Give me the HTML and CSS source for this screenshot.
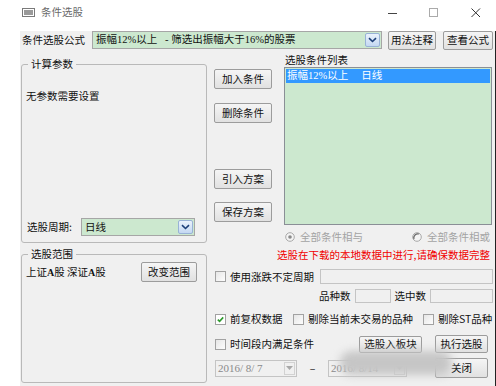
FILE: index.html
```html
<!DOCTYPE html>
<html lang="zh-CN">
<head>
<meta charset="utf-8">
<title>条件选股</title>
<link rel="stylesheet" href="styles.css">
</head>
<body>
<div class="titlebar">
  <svg class="app-icon" width="13" height="9" viewBox="0 0 13 9"><rect x="0.5" y="0.5" width="12" height="8" fill="#fff" stroke="#7a7a7a"/><rect x="2" y="2" width="9" height="5" fill="#9a9a9a"/></svg>
  <span class="title">条件选股</span>
  <div class="win-ctrls">
    <svg class="wc-min" width="10" height="10" viewBox="0 0 10 10"><path d="M0 5.5H9" stroke="#444" stroke-width="1"/></svg>
    <svg class="wc-max" width="10" height="10" viewBox="0 0 10 10"><rect x="0.5" y="0.5" width="8" height="8" fill="none" stroke="#aaa"/></svg>
    <svg class="wc-close" width="10" height="10" viewBox="0 0 10 10"><path d="M0.5 0.5L9 9M9 0.5L0.5 9" stroke="#333" stroke-width="1"/></svg>
  </div>
</div>
<div class="client">
  <div class="formula">
    <span class="formula-label">条件选股公式</span>
    <div class="combo combo-formula">
      <span class="combo-text mixed">振幅12%以上 &nbsp;&nbsp;- 筛选出振幅大于16%的股票</span>
      <span class="drop"><svg width="9" height="6" viewBox="0 0 9 6"><path d="M1 1.2L4.5 4.5L8 1.2" fill="none" stroke="#1d3f78" stroke-width="1.6"/></svg></span>
    </div>
    <button class="btn btn-usage">用法注释</button>
    <button class="btn btn-view">查看公式</button>
  </div>
  <div class="main">
    <div class="left-col">
      <fieldset class="group g-params">
        <legend>计算参数</legend>
        <div class="no-params">无参数需要设置</div>
        <div class="period-row">
          <span class="period-label">选股周期:</span>
          <div class="combo combo-period">
            <span class="combo-text">日线</span>
            <span class="drop"><svg width="9" height="6" viewBox="0 0 9 6"><path d="M1 1.2L4.5 4.5L8 1.2" fill="none" stroke="#1d3f78" stroke-width="1.6"/></svg></span>
          </div>
        </div>
      </fieldset>
      <fieldset class="group g-range">
        <legend>选股范围</legend>
        <div class="range-row">
          <span class="range-text">上证<b>A</b>股 深证<b>A</b>股</span>
          <button class="btn btn-range">改变范围</button>
        </div>
      </fieldset>
    </div>
    <div class="right-col">
      <div class="top-right">
        <div class="btn-col">
          <button class="btn btn-side b-add">加入条件</button>
          <button class="btn btn-side b-del">删除条件</button>
          <button class="btn btn-side b-import">引入方案</button>
          <button class="btn btn-side b-save">保存方案</button>
        </div>
        <div class="list-col">
          <div class="list-label">选股条件列表</div>
          <div class="list">
            <div class="list-item selected mixed">振幅12%以上 &nbsp;&nbsp;&nbsp;&nbsp;日线</div>
          </div>
        </div>
      </div>
      <div class="radios">
        <span class="radio-item r-and"><svg class="radio" width="10" height="10" viewBox="0 0 10 10"><circle cx="5" cy="5" r="4.3" fill="#f4f4f4" stroke="#a8a8a8"/><circle cx="5" cy="5" r="1.8" fill="#8a8a8a"/></svg>全部条件相与</span>
        <span class="radio-item r-or"><svg class="radio" width="10" height="10" viewBox="0 0 10 10"><circle cx="5" cy="5" r="4.3" fill="#f4f4f4" stroke="#a8a8a8"/><path d="M2 7A4 4 0 0 1 7 2" fill="none" stroke="#6a6a6a" stroke-width="1.2"/></svg>全部条件相或</span>
      </div>
      <div class="warn">选股在下载的本地数据中进行,请确保数据完整</div>
      <div class="row r-period">
        <span class="check-item"><span class="checkbox"></span>使用涨跌不定周期</span>
        <span class="textbox tb-period"></span>
      </div>
      <div class="row r-count">
        <span class="count-label">品种数</span>
        <span class="textbox tb-count"></span>
        <span class="count-label sel-label">选中数</span>
        <span class="textbox tb-sel"></span>
      </div>
      <div class="row r-checks">
        <span class="check-item ci-fq"><span class="checkbox checked"><svg width="9" height="9" viewBox="0 0 9 9"><path d="M1.8 4.6L3.6 6.4L7.2 2.4" fill="none" stroke="#2e9a2e" stroke-width="1.6"/></svg></span>前复权数据</span>
        <span class="check-item ci-exclude"><span class="checkbox"></span>剔除当前未交易的品种</span>
        <span class="check-item ci-st"><span class="checkbox"></span>剔除ST品种</span>
      </div>
      <div class="row r-time">
        <span class="check-item ci-time"><span class="checkbox"></span>时间段内满足条件</span>
        <button class="btn btn-board">选股入板块</button>
        <button class="btn btn-run">执行选股</button>
      </div>
      <div class="row r-dates">
        <div class="datepick dp-from"><span class="dp-text">2016/ 8/ 7</span><span class="dp-drop"><svg width="7" height="4" viewBox="0 0 7 4"><path d="M0 0H7L3.5 4Z" fill="#a8a8a8"/></svg></span></div>
        <span class="dash">–</span>
        <div class="datepick dp-to"><span class="dp-text">2016/ 8/14</span><span class="dp-drop"><svg width="7" height="4" viewBox="0 0 7 4"><path d="M0 0H7L3.5 4Z" fill="#a8a8a8"/></svg></span></div>
        <button class="btn btn-close">关闭</button>
      </div>
    </div>
  </div>
  <div class="blur"></div>
</div>
</body>
</html>
```
FILE: styles.css
```css
* { box-sizing: border-box; }
body {
  margin: 0;
  width: 496px;
  height: 386px;
  overflow: hidden;
  background: #fff;
  font-family: "Noto Sans CJK SC", "Noto Sans", sans-serif;
  font-size: 10.5px;
  line-height: 14px;
  color: #111;
}
.titlebar {
  height: 24px;
  display: flex;
  align-items: center;
}
.app-icon { margin-left: 22px; margin-top: 1px; }
.title { margin-left: 6px; color: #6a6a6a; font-size: 10.5px; }
.win-ctrls { margin-left: auto; display: flex; align-items: center; }
.wc-min { margin-right: 31px; margin-top: 2px; }
.wc-max { margin-right: 32px; margin-top: 2px; }
.wc-close { margin-right: 15px; margin-top: 1px; }

.client {
  position: relative;
  margin-left: 20px;
  height: 362px;
  background: #f0f0f0;
  border-right: 1px solid #222;
}

.mixed { font-family: "Liberation Serif", "Noto Sans CJK SC", serif; }

.formula {
  display: flex;
  align-items: center;
  height: 18px;
  margin-top: 7px;
  padding-left: 2px;
}
.formula-label { width: 70px; }
.combo {
  display: flex;
  align-items: center;
  height: 18px;
  border: 1px solid #a6a6a6;
  background: #cce8cf;
  padding-left: 3px;
}
.combo-text { flex: 1; white-space: nowrap; overflow: hidden; }
.drop {
  width: 15px;
  height: 14px;
  margin-right: 1px;
  display: flex;
  align-items: center;
  justify-content: center;
  border: 1px solid #98b2d6;
  border-radius: 2px;
  background: linear-gradient(#eaf2fc, #c4d8f2);
}
.combo-formula { width: 290px; }
.btn {
  font-family: inherit;
  font-size: 10.5px;
  line-height: 14px;
  color: #111;
  padding: 0;
  height: 20px;
  border: 1px solid #9c9c9c;
  border-radius: 2px;
  background: linear-gradient(#f5f5f5, #e1e1e1);
}
.btn-usage { width: 48px; height: 19px; margin-left: 6px; }
.btn-view { width: 50px; height: 19px; margin-left: 7px; }

.main { display: flex; }
.left-col { margin-left: 1px; width: 186px; }
.group {
  margin: 0;
  padding: 0;
  min-width: 0;
  border: 1px solid #b9b9b9;
  border-radius: 3px;
}
.group legend {
  padding: 0 3px;
  margin-left: 6px;
  line-height: 14px;
}
.g-params {
  margin-top: 8px;
  height: 186px;
  display: flex;
  flex-direction: column;
}
.no-params { margin-top: 18px; padding-left: 4px; }
.period-row {
  margin-top: auto;
  margin-bottom: 6px;
  display: flex;
  align-items: center;
  padding-left: 5px;
}
.period-label { width: 54px; }
.combo-period { width: 114px; }

.g-range { margin-top: 4px; height: 136px; }
.range-row {
  display: flex;
  align-items: center;
  margin-top: 1px;
  padding-left: 4px;
}
.range-text b { font-family: "Liberation Serif", serif; font-weight: bold; font-size: 10px; }
.btn-range { width: 56px; height: 20px; margin-left: auto; margin-right: 9px; }

.right-col { margin-left: 7px; width: 279px; }
.top-right { display: flex; }
.btn-col { width: 58px; padding-top: 20px; display: flex; flex-direction: column; }
.btn-side { width: 58px; height: 20px; }
.b-del { margin-top: 14px; }
.b-import { margin-top: 46px; }
.b-save { margin-top: 13px; }
.list-col { margin-left: 12px; width: 208px; }
.list-label { margin-top: 4px; padding-left: 1px; }
.list {
  height: 158px;
  border: 1px solid #8a8f96;
  background: #cce8cf;
  padding: 1px;
}
.list-item { height: 14px; padding-left: 1px; white-space: nowrap; }
.list-item.selected { background: #3399ff; color: #fff; }

.radios {
  display: flex;
  align-items: center;
  height: 14px;
  margin-top: 5px;
  color: #a3a3a3;
}
.radio-item { display: flex; align-items: center; }
.radio { margin-right: 5px; }
.r-and { margin-left: 71px; width: 127px; }

.warn {
  margin-top: 4px;
  text-align: right;
  padding-right: 3px;
  color: #f00000;
  white-space: nowrap;
}

.row { display: flex; align-items: center; }
.check-item { display: flex; align-items: center; white-space: nowrap; }
.checkbox {
  width: 11px;
  height: 11px;
  margin-left: 1px;
  margin-right: 4px;
  border: 1px solid #a2a2a2;
  background: linear-gradient(135deg, #e6e6e6, #fdfdfd);
  display: flex;
  align-items: center;
  justify-content: center;
}
.checkbox.checked { background: #fff; }
.textbox {
  display: block;
  height: 14px;
  border: 1px solid #c4c4c4;
  background: #f0f0f0;
}
.r-period { margin-top: 7px; height: 15px; }
.tb-period { width: 173px; height: 15px; margin-left: auto; }

.r-count { margin-top: 4px; height: 15px; padding-left: 105px; }
.tb-count { width: 36px; margin-left: 4px; }
.sel-label { margin-left: 4px; }
.tb-sel { width: 63px; margin-left: 4px; }

.r-checks { margin-top: 9px; height: 14px; }
.ci-fq { width: 78px; }
.ci-exclude { width: 130px; }

.r-time { margin-top: 9px; height: 18px; }
.ci-time { width: 145px; }
.btn-board { width: 63px; height: 17px; }
.btn-run { width: 53px; height: 18px; margin-left: 13px; }

.r-dates { margin-top: 5px; height: 20px; }
.datepick {
  display: flex;
  align-items: center;
  height: 17px;
  border: 1px solid #c4c4c4;
  background: #f0f0f0;
  color: #8a8a8a;
  font-family: "Liberation Serif", serif;
  font-size: 11px;
}
.dp-text { flex: 1; padding-left: 2px; white-space: nowrap; }
.dp-drop {
  width: 11px;
  height: 13px;
  margin-right: 1px;
  border: 1px solid #d2d2d2;
  display: flex;
  align-items: center;
  justify-content: center;
}
.dp-from { width: 82px; margin-left: 1px; }
.dash { width: 31px; text-align: center; color: #222; }
.dp-to { width: 79px; }
.btn-close { width: 53px; height: 20px; margin-left: 28px; }

.blur {
  position: absolute;
  left: 320px;
  top: 320px;
  width: 112px;
  height: 24px;
  background: #c6c6c6;
  border-radius: 12px;
  filter: blur(4px);
}
```
